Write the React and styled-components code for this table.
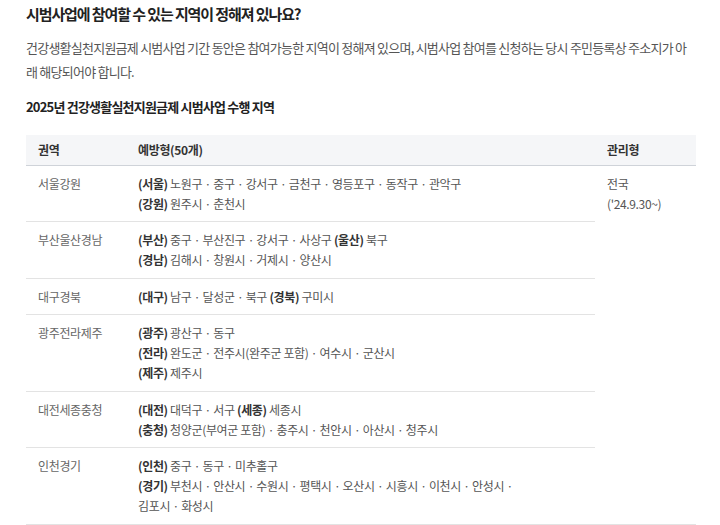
import styled, { createGlobalStyle } from "styled-components"

const GlobalStyle = createGlobalStyle`
  body {
    margin: 0;
    background: #fff;
    font-family: "Noto Sans CJK KR", "Noto Sans", sans-serif;
  }
`

const Page = styled.div`
  width: 670px;
  margin-left: 26px;
  padding-top: 4px;
`

const Title = styled.h2`
  margin: 0;
  font-size: 15px;
  line-height: 20px;
  font-weight: 700;
  color: #222;
  letter-spacing: -1.1px;
`

const Desc = styled.p`
  margin: 12px 0 0;
  font-size: 13px;
  line-height: 24px;
  color: #555;
  letter-spacing: -0.76px;
`

const SubTitle = styled.h3`
  margin: 13px 0 0;
  font-size: 13px;
  line-height: 20px;
  font-weight: 700;
  color: #222;
  letter-spacing: -0.8px;
`

const Table = styled.table`
  margin-top: 18px;
  width: 100%;
  border-collapse: collapse;
  table-layout: fixed;
  font-size: 12px;
  line-height: 20px;
  letter-spacing: -0.35px;
`

const Head = styled.th`
  box-sizing: border-box;
  height: 30px;
  padding: 0 12px;
  background: #f5f6f8;
  border-bottom: 1px solid #cfd3d9;
  text-align: left;
  font-weight: 700;
  color: #333;
  width: ${p => (p.$w ? `${p.$w}px` : "auto")};
`

const Cell = styled.td`
  padding: 8px 12px 7.5px;
  border-bottom: 1px solid #e3e3e3;
  vertical-align: top;
  color: ${p => (p.$muted ? "#666" : "#555")};
`

const Line = styled.div`
  white-space: nowrap;
`

const Prov = styled.b`
  font-weight: 700;
  color: #333;
`

const rows = [
  {
    area: "서울강원",
    lines: [
      [["서울", "노원구 · 중구 · 강서구 · 금천구 · 영등포구 · 동작구 · 관악구"]],
      [["강원", "원주시 · 춘천시"]],
    ],
  },
  {
    area: "부산울산경남",
    lines: [
      [["부산", "중구 · 부산진구 · 강서구 · 사상구"], ["울산", "북구"]],
      [["경남", "김해시 · 창원시 · 거제시 · 양산시"]],
    ],
  },
  {
    area: "대구경북",
    lines: [[["대구", "남구 · 달성군 · 북구"], ["경북", "구미시"]]],
  },
  {
    area: "광주전라제주",
    lines: [
      [["광주", "광산구 · 동구"]],
      [["전라", "완도군 · 전주시(완주군 포함) · 여수시 · 군산시"]],
      [["제주", "제주시"]],
    ],
  },
  {
    area: "대전세종충청",
    lines: [
      [["대전", "대덕구 · 서구"], ["세종", "세종시"]],
      [["충청", "청양군(부여군 포함) · 충주시 · 천안시 · 아산시 · 청주시"]],
    ],
  },
  {
    area: "인천경기",
    lines: [
      [["인천", "중구 · 동구 · 미추홀구"]],
      [["경기", "부천시 · 안산시 · 수원시 · 평택시 · 오산시 · 시흥시 · 이천시 · 안성시 ·"]],
      [[null, "김포시 · 화성시"]],
    ],
  },
]

export default function App() {
  return (
    <>
      <GlobalStyle />
      <Page>
        <Title>시범사업에 참여할 수 있는 지역이 정해져 있나요?</Title>
        <Desc>
          건강생활실천지원금제 시범사업 기간 동안은 참여가능한 지역이 정해져 있으며, 시범사업 참여를 신청하는 당시 주민등록상 주소지가 아래 해당되어야 합니다.
        </Desc>
        <SubTitle>2025년 건강생활실천지원금제 시범사업 수행 지역</SubTitle>
        <Table>
          <thead>
            <tr>
              <Head $w={100}>권역</Head>
              <Head>예방형(50개)</Head>
              <Head $w={101}>관리형</Head>
            </tr>
          </thead>
          <tbody>
            {rows.map((row, i) => (
              <tr key={row.area}>
                <Cell $muted>{row.area}</Cell>
                <Cell>
                  {row.lines.map((line, j) => (
                    <Line key={j}>
                      {line.map(([prov, text], k) => (
                        <span key={k}>
                          {k > 0 && " "}
                          {prov && <Prov>({prov})</Prov>}
                          {prov && " "}
                          {text}
                        </span>
                      ))}
                    </Line>
                  ))}
                </Cell>
                {i === 0 && (
                  <Cell rowSpan={rows.length}>
                    전국
                    <br />
                    ('24.9.30~)
                  </Cell>
                )}
              </tr>
            ))}
          </tbody>
        </Table>
      </Page>
    </>
  )
}
